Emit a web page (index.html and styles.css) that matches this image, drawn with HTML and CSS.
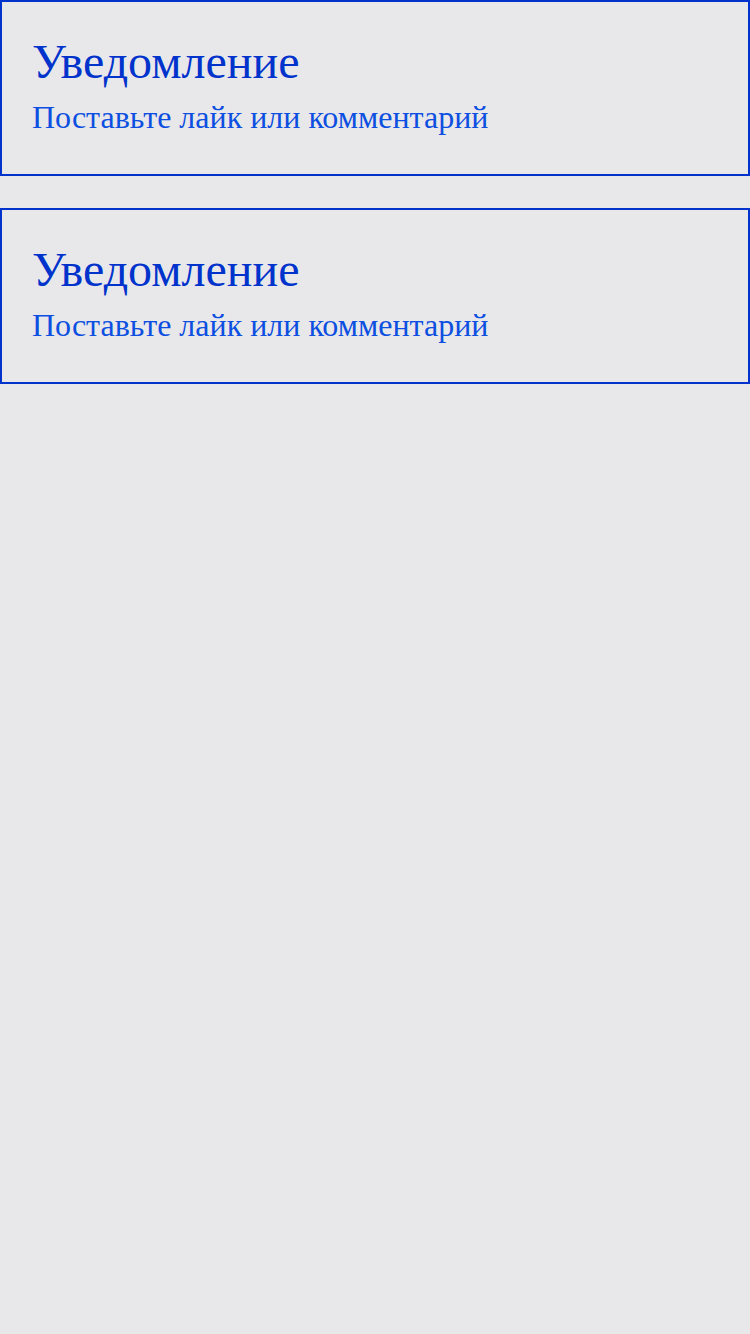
FILE: index.html
```html
<!DOCTYPE html>
<html lang="ru">
<head>
<meta charset="utf-8">
<link rel="stylesheet" href="styles.css">
</head>
<body>
<div class="list">
  <div class="card">
    <div class="title">Уведомление</div>
    <div class="text">Поставьте лайк или комментарий</div>
  </div>
  <div class="card">
    <div class="title">Уведомление</div>
    <div class="text">Поставьте лайк или комментарий</div>
  </div>
</div>
</body>
</html>
```
FILE: styles.css
```css
html, body {
  margin: 0;
  padding: 0;
  background: #e8e8ea;
  font-family: "Liberation Serif", serif;
}
.list {
  display: flex;
  flex-direction: column;
  gap: 32px;
}
.card {
  box-sizing: border-box;
  height: 176px;
  border: 2px solid #0033cc;
  padding: 30px 30px;
  display: flex;
  flex-direction: column;
}
.title {
  font-size: 48px;
  line-height: 60px;
  color: #0033cc;
}
.text {
  margin-top: 5px;
  font-size: 32px;
  line-height: 40px;
  color: #0d4fe0;
}
```
